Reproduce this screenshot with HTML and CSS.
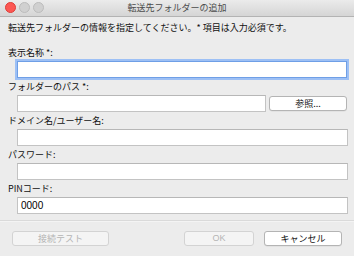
FILE: index.html
```html
<!DOCTYPE html>
<html lang="ja">
<head>
<meta charset="utf-8">
<link rel="stylesheet" href="styles.css">
</head>
<body>
<div class="window">
  <div class="titlebar">
    <div class="lights">
      <span class="light red"></span>
      <span class="light gray"></span>
      <span class="light gray"></span>
    </div>
    <div class="title">転送先フォルダーの追加</div>
  </div>
  <div class="content">
    <p class="intro">転送先フォルダーの情報を指定してください。* 項目は入力必須です。</p>
    <div class="fields">
      <div class="field">
        <div class="label">表示名称 *:</div>
        <div class="input focus"></div>
      </div>
      <div class="field">
        <div class="label">フォルダーのパス *:</div>
        <div class="row">
          <div class="input grow"></div>
          <div class="btn browse">参照...</div>
        </div>
      </div>
      <div class="field">
        <div class="label">ドメイン名/ユーザー名:</div>
        <div class="input"></div>
      </div>
      <div class="field">
        <div class="label">パスワード:</div>
        <div class="input"></div>
      </div>
      <div class="field">
        <div class="label">PINコード:</div>
        <div class="input">0000</div>
      </div>
    </div>
    <div class="sep"></div>
    <div class="footer">
      <div class="btn disabled test">接続テスト</div>
      <div class="right">
        <div class="btn disabled ok">OK</div>
        <div class="btn cancel">キャンセル</div>
      </div>
    </div>
  </div>
</div>
</body>
</html>
```

FILE: styles.css
```css
* { box-sizing: border-box; }
html, body {
  margin: 0;
  padding: 0;
  width: 354px;
  height: 256px;
  overflow: hidden;
  background: #ececec;
  font-family: "Noto Sans CJK JP", "Noto Sans", sans-serif;
  font-size: 9px;
  color: #111;
}
.window {
  width: 354px;
  height: 256px;
  display: flex;
  flex-direction: column;
}
.titlebar {
  height: 17px;
  background: linear-gradient(#ebebeb, #d5d5d5);
  border-bottom: 1px solid #b3b3b3;
  display: flex;
  align-items: center;
  justify-content: center;
  position: relative;
}
.lights {
  position: absolute;
  left: 5px;
  top: 2px;
  display: flex;
  gap: 3px;
}
.light {
  width: 11px;
  height: 11px;
  border-radius: 50%;
}
.light.red {
  background: #fc5753;
  border: 1px solid #df3d37;
}
.light.gray {
  background: #d0d0d0;
  border: 1px solid #bcbcbc;
}
.title {
  color: #4b4b4b;
  font-size: 9px;
  line-height: 12px;
}
.content {
  display: flex;
  flex-direction: column;
  padding: 0 6px 0 8px;
}
.intro {
  margin: 4px 0 0 0;
  line-height: 13px;
  height: 13px;
  white-space: nowrap;
}
.fields {
  margin-top: 10px;
  display: flex;
  flex-direction: column;
}
.field {
  display: flex;
  flex-direction: column;
}
.label {
  height: 17px;
  line-height: 15px;
  padding-top: 1px;
  white-space: nowrap;
}
.input {
  margin-left: 9px;
  height: 17px;
  background: #fff;
  border: 1px solid #c3c3c3;
  border-top-color: #b7b7b7;
  font-family: "Liberation Sans", "Noto Sans", sans-serif;
  font-size: 10px;
  line-height: 15px;
  padding-left: 3px;
  color: #000;
}
.input.focus {
  border: 1px solid #6f9fe6;
  box-shadow: 0 0 0 2px #9dc0f5;
  margin-right: 1px;
}
.row {
  display: flex;
  align-items: flex-start;
  gap: 3px;
}
.row .input.grow {
  flex: 1;
}
.btn {
  height: 15px;
  border: 1px solid #b4b4b4;
  border-radius: 3px;
  background: #fff;
  display: flex;
  align-items: center;
  justify-content: center;
  font-size: 9px;
  line-height: 13px;
  color: #111;
  box-shadow: 0 0.5px 0 rgba(0,0,0,0.08);
}
.browse {
  width: 78px;
  margin-top: 1px;
  margin-right: 1px;
}
.sep {
  margin: 6px -6px 0 -8px;
  height: 2px;
  border-top: 1px solid #dadada;
  border-bottom: 1px solid #f4f4f4;
}
.footer {
  margin-top: 9px;
  display: flex;
  justify-content: space-between;
  padding-left: 4px;
  padding-right: 6px;
}
.right {
  display: flex;
  gap: 10px;
}
.btn.disabled {
  background: #f4f4f4;
  border-color: #d3d3d3;
  color: #b4b4b4;
  box-shadow: none;
}
.test { width: 97px; }
.ok {
  width: 70px;
  font-family: "Liberation Sans", "Noto Sans", sans-serif;
}
.cancel { width: 78px; }
```
